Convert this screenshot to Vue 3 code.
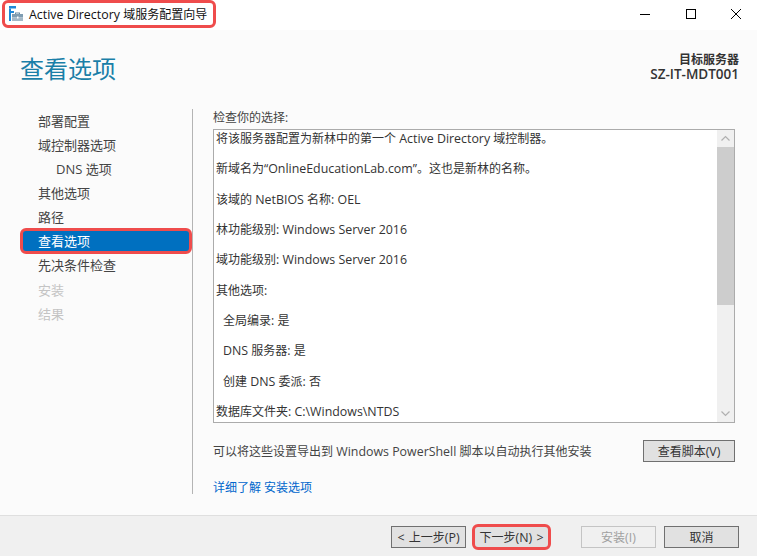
<script setup>
const navItems = [
  { label: '部署配置' },
  { label: '域控制器选项' },
  { label: 'DNS 选项', sub: true },
  { label: '其他选项' },
  { label: '路径' },
  { label: '查看选项', active: true },
  { label: '先决条件检查' },
  { label: '安装', disabled: true },
  { label: '结果', disabled: true },
]
const lines = [
  { text: '将该服务器配置为新林中的第一个 Active Directory 域控制器。' },
  { text: '新域名为“OnlineEducationLab.com”。这也是新林的名称。' },
  { text: '该域的 NetBIOS 名称: OEL' },
  { text: '林功能级别: Windows Server 2016' },
  { text: '域功能级别: Windows Server 2016' },
  { text: '其他选项:' },
  { text: '全局编录: 是', indent: true },
  { text: 'DNS 服务器: 是', indent: true },
  { text: '创建 DNS 委派: 否', indent: true },
  { text: '数据库文件夹: C:\\Windows\\NTDS' },
]
// Latin runs are set a touch larger than the CJK runs, as in the reference.
const parts = (text) =>
  text.split(/([\u2e80-\u9fff\uff00-\uffef\u3000-\u303f\u201c\u201d]+)/).filter(Boolean).map((t) => ({
    t,
    latin: !/[\u2e80-\u9fff\uff00-\uffef\u3000-\u303f\u201c\u201d]/.test(t),
  }))
const exportText = '可以将这些设置导出到 Windows PowerShell 脚本以自动执行其他安装'
const titleText = 'Active Directory 域服务配置向导'
const scriptLabel = '查看脚本(V)'
const buttons = [
  { label: '< 上一步(P)', cls: 'prev-btn' },
  { label: '下一步(N) >', cls: 'next-btn' },
  { label: '安装(I)', cls: 'install-btn', disabled: true },
  { label: '取消', cls: 'cancel-btn' },
]
</script>

<template>
  <div class="window">
    <header class="titlebar">
      <div class="title-mark">
        <svg class="app-icon" width="15" height="16" viewBox="0 0 15 16">
          <rect x="0" y="0" width="7" height="2.500" fill="#1e88d8" />
          <rect x="0" y="2.500" width="2" height="12.500" fill="#1e88d8" />
          <rect x="2" y="5" width="3" height="2" fill="#1e88d8" />
          <path d="M6 6.500h5v2h-1v-1H7v1H6z" fill="#6a8aa0" />
          <rect x="3" y="8" width="11" height="3.500" fill="#7f9db2" />
          <rect x="3" y="11.500" width="11" height="3.500" fill="#a3b8c7" />
          <rect x="8" y="10.500" width="1.500" height="2" fill="#fff" />
        </svg>
        <span class="title-text"><span v-for="p in parts(titleText)" :key="p.t" :class="{ latin: p.latin }">{{ p.t }}</span></span>
      </div>
      <div class="win-controls">
        <svg width="12" height="12" viewBox="0 0 12 12"><path d="M1 6.500h10" stroke="#000" fill="none" /></svg>
        <svg width="12" height="12" viewBox="0 0 12 12"><rect x="1.500" y="1.500" width="9" height="9" stroke="#000" fill="none" /></svg>
        <svg width="12" height="12" viewBox="0 0 12 12"><path d="M1 1l10 10M11 1L1 11" stroke="#000" fill="none" /></svg>
      </div>
    </header>

    <div class="page-head">
      <h1 class="page-title">查看选项</h1>
      <div class="target">
        <div>目标服务器</div>
        <div class="target-name">SZ-IT-MDT001</div>
      </div>
    </div>

    <div class="main">
      <nav class="nav">
        <div
          v-for="item in navItems"
          :key="item.label"
          class="nav-item"
          :class="{ sub: item.sub, active: item.active, disabled: item.disabled }"
        >{{ item.label }}</div>
      </nav>

      <section class="content">
        <div class="label">检查你的选择:</div>
        <div class="textbox">
          <div class="text-scroll">
            <p v-for="line in lines" :key="line.text" :class="{ indent: line.indent }"><span v-for="p in parts(line.text)" :key="p.t" :class="{ latin: p.latin }">{{ p.t }}</span></p>
          </div>
          <div class="scrollbar">
            <svg class="arrow" width="17" height="17" viewBox="0 0 17 17"><path d="M4.500 10.500l4-4 4 4" stroke="#b0b0b0" fill="none" stroke-width="1.200" /></svg>
            <div class="track"><div class="thumb"></div></div>
            <svg class="arrow" width="17" height="17" viewBox="0 0 17 17"><path d="M4.500 6.500l4 4 4-4" stroke="#b0b0b0" fill="none" stroke-width="1.200" /></svg>
          </div>
        </div>
        <div class="export-row">
          <span><span v-for="p in parts(exportText)" :key="p.t" :class="{ latin: p.latin }">{{ p.t }}</span></span>
          <button class="btn script-btn"><span v-for="p in parts(scriptLabel)" :key="p.t" :class="{ latin: p.latin }">{{ p.t }}</span></button>
        </div>
        <a class="more-link">详细了解 安装选项</a>
      </section>
    </div>

    <footer class="footer">
      <button
        v-for="b in buttons"
        :key="b.cls"
        class="btn wizard-btn"
        :class="b.cls"
        :disabled="b.disabled"
      ><span v-for="p in parts(b.label)" :key="p.t" :class="{ 'latin-wide': p.latin }">{{ p.t }}</span></button>
    </footer>
  </div>
</template>

<style>
html, body { margin: 0; background: #fff; }
</style>

<style scoped>
.window {
  width: 757px;
  height: 556px;
  display: flex;
  flex-direction: column;
  overflow: hidden;
  background: #fbfbfb;
  color: #333;
  font-family: "Open Sans", "Noto Sans CJK SC", sans-serif;
  font-size: 12px;
}
.latin { font-size: 12.400px; }
.latin-wide { font-size: 12.400px; word-spacing: 1px; }
.titlebar {
  height: 30px;
  flex: none;
  background: #fff;
  display: flex;
  justify-content: space-between;
  box-sizing: border-box;
}
.title-mark {
  width: 214px;
  height: 28px;
  box-sizing: border-box;
  margin-left: 2px;
  padding-left: 4px;
  display: flex;
  align-items: center;
  gap: 5px;
  border: 3px solid #ef4c4c;
  border-radius: 6px;
}
.title-text { color: #111; white-space: nowrap; }
.win-controls {
  display: flex;
  gap: 33.500px;
  padding: 8px 15px 0 0;
}
.win-controls svg { display: block; }
.page-head {
  height: 79px;
  flex: none;
  display: flex;
  justify-content: space-between;
  padding: 0 18px 0 20px;
}
.page-title {
  margin: 21px 0 0;
  font-size: 24px;
  line-height: 36px;
  font-weight: 400;
  color: #1a7fa8;
}
.target {
  margin-top: 22px;
  text-align: right;
  font-weight: 700;
  line-height: 15px;
  color: #333;
}
.target-name { font-size: 13.500px; font-weight: 600; }
.main {
  flex: 1;
  display: flex;
  min-height: 0;
}
.nav {
  width: 172px;
  height: 385px;
  margin-left: 20px;
  box-sizing: content-box;
  border-right: 1px solid #b4b4b4;
  flex: none;
}
.nav-item {
  height: 24.100px;
  line-height: 24.100px;
  padding-left: 18px;
  font-size: 13px;
  color: #444;
  white-space: nowrap;
}
.nav-item.sub { padding-left: 36px; }
.nav-item.active {
  box-sizing: border-box;
  height: 26px;
  line-height: 20px;
  margin: -1px 0 -1px;
  background: #0070c0;
  color: #fff;
  border: 3px solid #ef4c4c;
  border-radius: 6px;
  padding-left: 15px;
}
.nav-item.disabled { color: #c4c4c4; }
.content {
  width: 522px;
  margin-left: 20px;
  flex: none;
}
.label { height: 20px; line-height: 18px; color: #444; }
.textbox {
  height: 294px;
  box-sizing: border-box;
  border: 1px solid #ababab;
  background: #fff;
  display: flex;
}
.text-scroll {
  flex: 1;
  overflow: hidden;
  padding-left: 2px;
  min-width: 0;
}
.text-scroll p {
  margin: 0;
  height: 30.350px;
  line-height: 30.350px;
  color: #333;
  white-space: nowrap;
}
.text-scroll p:first-child { margin-top: -6px; }
.text-scroll p.indent { padding-left: 7px; }
.scrollbar {
  width: 17px;
  flex: none;
  display: flex;
  flex-direction: column;
  background: #f0f0f0;
}
.arrow { display: block; flex: none; }
.track { flex: 1; }
.thumb { height: 158px; background: #cdcdcd; }
.export-row {
  margin-top: 17px;
  height: 22px;
  display: flex;
  justify-content: space-between;
  align-items: center;
  color: #444;
}
.btn {
  padding: 0;
  border: 1px solid #707070;
  background: #e1e1e1;
  color: #333;
  font: inherit;
  box-sizing: border-box;
}
.script-btn { width: 92px; height: 22px; }
.more-link {
  display: block;
  margin-top: 17px;
  line-height: 18px;
  color: #0066cc;
}
.footer {
  height: 41px;
  flex: none;
  box-sizing: border-box;
  border-top: 1px solid #dfdfdf;
  background: #f0f0f0;
  display: flex;
  align-items: flex-start;
  padding: 10px 18px 0 391px;
}
.wizard-btn { width: 75px; height: 22px; }
.next-btn {
  margin-left: 6px;
  width: 79px;
  height: 26px;
  margin-top: -2px;
  border: 3px solid #ef4c4c;
  border-radius: 6px;
  background: #e1e1e1;
}
.install-btn {
  margin-left: 30px;
  border-color: #c4c4c4;
  background: #f0f0f0;
  color: #a0a0a0;
}
.cancel-btn { margin-left: 8px; }
</style>
